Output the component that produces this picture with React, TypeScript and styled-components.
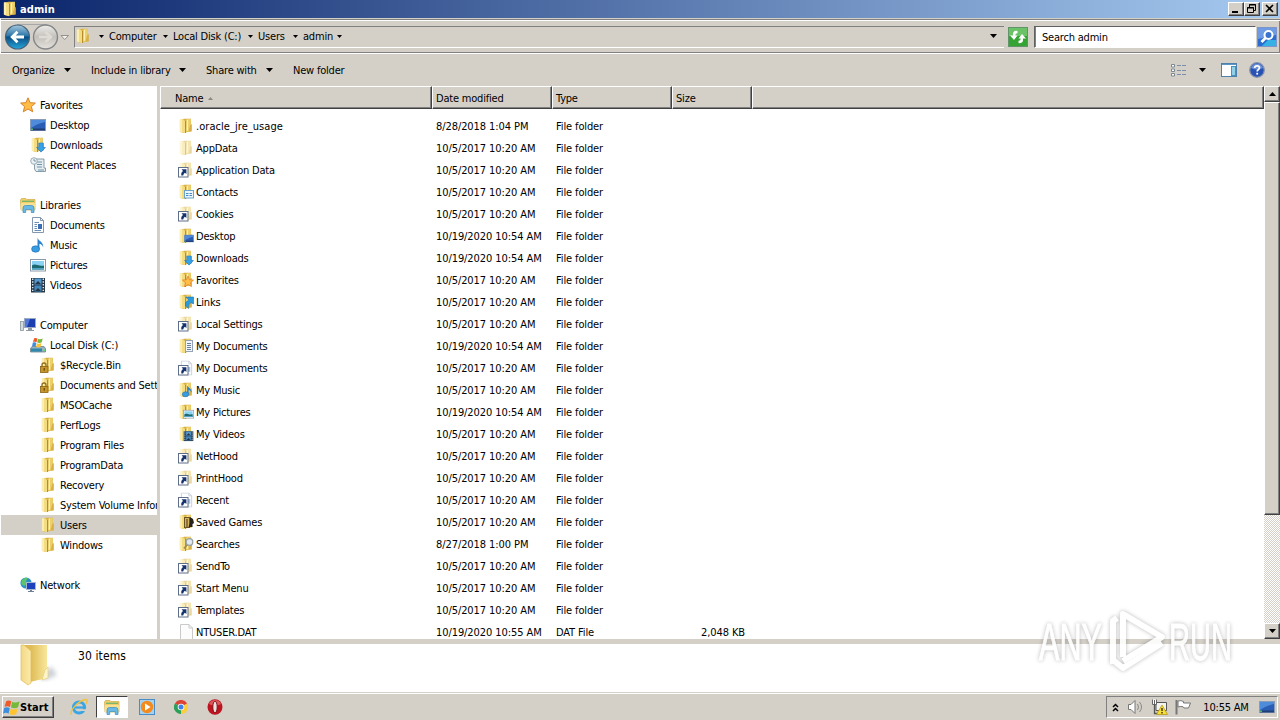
import React from "react";
import { styled, createGlobalStyle } from "styled-components";

type Kind = string;

const FolderShape = ({ faded }: { faded?: boolean }) => (
  <g opacity={faded ? 0.5 : 1}>
    <path d="M2.5 2.5 L6 0.8 H13 V13 L6 15 L2.5 14 Z" fill="#d9b145" />
    <path d="M8.6 1 H12.8 V13.6 H8 Z" fill="#ecd06d" />
    <path d="M12.3 7 L13.8 6 V13.6 H10.4 Z" fill="#d8b043" />
    <path d="M1.8 1.5 L5 1.2 L7 3 V15.3 L1.8 13.6 Z" fill="#f4dc82" />
    <path d="M2 1.5 H4 V14.3 L2 13.6 Z" fill="#fbeeb2" />
    <path d="M7.5 3 V15" stroke="#b58d2c" strokeWidth="1" />
    <path d="M9.4 2 V12.8" stroke="#fff1b3" strokeWidth="1.2" />
  </g>
);

const StarShape = () => (
  <path
    d="M8 0.8 L10.1 5.7 L15.4 6.1 L11.4 9.6 L12.7 14.8 L8 12 L3.3 14.8 L4.6 9.6 L0.6 6.1 L5.9 5.7 Z"
    fill="#ffbd45"
    stroke="#d9822b"
    strokeWidth="1"
  />
);

const ScreenShape = () => (
  <g>
    <rect x="0.5" y="2.5" width="15" height="11" fill="#2a5db4" stroke="#8a9db8" />
    <path d="M1 3 H15 V5 C10 6 5 8 1 11 Z" fill="#4e8cdb" />
    <rect x="1" y="11.5" width="14" height="2" fill="#203e76" />
    <rect x="1" y="11.5" width="2" height="1.5" fill="#55b76a" />
  </g>
);

const DownShape = () => (
  <path d="M4.5 0.5 H11.5 V8 H15 L8 15.5 L1 8 H4.5 Z" fill="#36a3e8" stroke="#2174b8" />
);

const NoteShape = () => (
  <g>
    <path d="M7.5 0.5 C8 4 13.8 4.6 13.2 10.5 C12.5 8 10.6 7 9.4 6.8 V12 H7.5 Z" fill="#2b83cf" />
    <ellipse cx="5.6" cy="12" rx="4" ry="3.2" fill="#379ce0" stroke="#1d68b0" strokeWidth="0.6" />
  </g>
);

const PageShape = () => (
  <g>
    <path d="M2.5 0.5 H10.5 L13.5 3.5 V15.5 H2.5 Z" fill="#fcfdff" stroke="#8497ae" />
    <path d="M10.5 0.5 V3.5 H13.5" fill="none" stroke="#8497ae" />
    <path d="M4.5 5.5 H9 M4.5 7.5 H7 M4.5 9.5 H7 M4.5 11.5 H7 M4.5 13.5 H11" stroke="#6d8db9" />
    <path d="M8 7 H12 V12 H8 Z" fill="#3b6fb5" />
  </g>
);

const PictureShape = () => (
  <g>
    <rect x="0.5" y="2.5" width="15" height="11.5" fill="#fff" stroke="#8999a9" />
    <rect x="2" y="4" width="12" height="8.5" fill="#8bd3f5" />
    <path d="M2 8.5 C5 6 8 9.5 14 8.5 V12.5 H2 Z" fill="#1d6a70" />
    <path d="M2 11 H14 V12.5 H2 Z" fill="#52a4c5" />
  </g>
);

const FilmShape = () => (
  <g>
    <rect x="1" y="1" width="14" height="14.5" fill="#24384a" />
    <rect x="4.5" y="1.5" width="7" height="6" fill="#5498ce" />
    <rect x="4.5" y="8.5" width="7" height="6" fill="#4388bd" />
    <path d="M5 7 L8 4 L11 7 M5 14 L8 11 L11 14" fill="#27333e" />
    <path d="M2.7 1.5 V15 M13.3 1.5 V15" stroke="#dce7ef" strokeWidth="1.4" strokeDasharray="1.4 1.4" />
  </g>
);

const WinFlag = () => (
  <g>
    <path d="M3 2 C4.6 1 6.2 1.2 7.8 2.2 L6.6 7.6 C5 6.6 3.2 6.6 1.4 7.4 Z" fill="#ef5b2a" />
    <path d="M8.6 2.6 C10.6 3.8 13 3.6 15.6 2.2 L14.2 7.8 C12 9 9.4 9 7.5 8 Z" fill="#74b93a" />
    <path d="M1.1 8.4 C3 7.4 4.8 7.6 6.4 8.6 L5.2 13.8 C3.6 12.8 1.8 12.8 0 13.8 Z" fill="#3d8ee0" />
    <path d="M7.2 9 C9.2 10.2 11.6 10 13.8 8.8 L12.5 14 C10.2 15.4 8 15.2 6 14.2 Z" fill="#fdc330" />
  </g>
);

const LibraryShape = () => (
  <g>
    <path d="M0.5 3 L1.5 1.5 H6 L7 2.5 H15 V13 H1 Z" fill="#f0cf6b" stroke="#d3a943" strokeWidth="0.7" />
    <path d="M2 4.3 H14" stroke="#79b56c" strokeWidth="1.4" />
    <path d="M1 6 H15 V13 H1 Z" fill="#f7e08f" />
    <path d="M3 15.5 V11 Q3 8.5 5.5 8.5 H11.5 Q14 8.5 14 11 V15.5 H11.3 V12.5 H5.7 V15.5 Z" fill="#69b9e6" stroke="#3b8dc4" strokeWidth="0.7" />
  </g>
);

const LinkBadge = () => (
  <g>
    <rect x="0.5" y="5.5" width="9.5" height="9.5" fill="#fff" stroke="#5f6f8a" />
    <path d="M3.6 7.2 H8.4 V12 L6.9 10.7 Q5.6 11.4 5.2 13.4 H3.4 Q2.6 10.6 5 8.9 Z" fill="#16336e" />
  </g>
);

const badge = (shape: React.ReactNode, size = 10) => (
  <svg x={16 - size} y={15.5 - size} width={size} height={size} viewBox="0 0 16 16">
    {shape}
  </svg>
);

const shapes: Record<Kind, React.ReactNode> = {
  folder: <FolderShape />,
  hidden: <FolderShape faded />,
  star: <StarShape />,
  desktop: <ScreenShape />,
  downloads: <><FolderShape />{badge(<DownShape />, 10)}</>,
  recent: (
    <g>
      <path d="M4.5 2 H14 V11 H15.5 V14.5 H6 L4.5 12 Z" fill="#e5edf1" stroke="#7d929d" strokeWidth="0.9" />
      <path d="M7 5 H12 M7 7.5 H12 M7 10 H12 M8 13 H14" stroke="#6f95ab" />
      <circle cx="4" cy="4" r="3.3" fill="#eaf2f5" stroke="#9badb6" />
      <path d="M4 2 V4 H6" fill="none" stroke="#6b818d" strokeWidth="0.8" />
    </g>
  ),
  libraries: <LibraryShape />,
  documents: <PageShape />,
  music: <NoteShape />,
  pictures: <PictureShape />,
  videos: <FilmShape />,
  computer: (
    <g>
      <rect x="0.5" y="4.5" width="3" height="9" fill="#d4dadd" stroke="#8b979d" strokeWidth="0.8" />
      <rect x="4.5" y="1.5" width="11" height="9" fill="#1c3fae" stroke="#9baac0" />
      <path d="M5 2 H10 L7 10 H5 Z" fill="#5277dc" />
      <path d="M8 11 H12 V13 H14 V14 H6 V13 H8 Z" fill="#8f9ba4" />
    </g>
  ),
  disk: (
    <g>
      <path d="M2 9.5 H14 L15.5 11.5 V15 H0.5 V11.5 Z" fill="#9ab0ba" stroke="#5d7883" strokeWidth="0.7" />
      <path d="M1 11.5 H12 V14.5 H1 Z" fill="#2d88ad" />
      <rect x="13" y="12.5" width="2" height="1.5" fill="#5fe15c" />
      <svg x="1.5" y="0" width="12" height="11" viewBox="0 0 16 16"><WinFlag /></svg>
    </g>
  ),
  locked: (
    <g>
      <FolderShape />
      <path d="M2 10 V8 Q2 6 4 6 Q6 6 6 8 V10" fill="none" stroke="#8e6d20" strokeWidth="1.3" />
      <rect x="0.5" y="9.5" width="7.5" height="6" fill="#c5942b" stroke="#8a6415" strokeWidth="0.8" />
      <rect x="3.6" y="11" width="1.3" height="2.6" fill="#6e4c0c" />
    </g>
  ),
  network: (
    <g>
      <circle cx="6" cy="6" r="5.6" fill="#2a91c8" />
      <path d="M2 3 Q5 0 8 1 L6 4 L7 7 L4 9 L1 7 Z" fill="#5cc469" />
      <rect x="6.5" y="5.5" width="9" height="7" fill="#1c43bd" stroke="#a8b7d0" />
      <path d="M10 13 H12 V14 H14 V15 H8 V14 H10 Z" fill="#6f8090" />
    </g>
  ),
  link: <g><FolderShape faded /><LinkBadge /></g>,
  linkPage: <g><g opacity="0.45">{badge(<PageShape />, 15)}</g><LinkBadge /></g>,
  contacts: (
    <g>
      <FolderShape />
      <rect x="6.5" y="6.5" width="9" height="7.5" fill="#e9f6fd" stroke="#6ba3c9" />
      <path d="M8 9.5 H10.5 M8 11.5 H10.5 M11.5 9.5 H14 M11.5 11.5 H14" stroke="#4a88bd" />
    </g>
  ),
  fDesktop: <><FolderShape />{badge(<ScreenShape />, 10)}</>,
  fStar: <><FolderShape />{badge(<StarShape />, 12)}</>,
  fLinks: (
    <g>
      <FolderShape />
      <path d="M8 3 H15.5 V10 L13 8.5 Q10 10 10.5 14.5 L7.5 12 Q6.5 8 10.5 6 Z" fill="#2a9bdd" stroke="#1d71af" strokeWidth="0.6" />
    </g>
  ),
  fDocs: (
    <g>
      <FolderShape />
      <rect x="7.5" y="2.5" width="7" height="11" fill="#f3f7fb" stroke="#93a3b3" />
      <path d="M9 5.5 H13 M9 7.5 H13 M9 9.5 H13 M9 11.5 H13" stroke="#68809c" />
    </g>
  ),
  fMusic: <><FolderShape />{badge(<NoteShape />, 13)}</>,
  fPics: <><FolderShape />{badge(<PictureShape />, 11)}</>,
  fVideos: <><FolderShape />{badge(<FilmShape />, 11)}</>,
  fGames: (
    <g>
      <FolderShape />
      <rect x="6.5" y="3.5" width="5" height="10" fill="#d5b25e" stroke="#6b5322" />
      <path d="M8 6 H10 M8 8 H10 M8 10 H10 M8 12 H10" stroke="#493714" />
      <path d="M12 3 L15 5 L16 9 L14.5 10 V13 H10.5 L12 9 Z" fill="#25221c" />
    </g>
  ),
  fSearch: (
    <g>
      <FolderShape />
      <path d="M9.5 8.5 L6 12.5" stroke="#a38a52" strokeWidth="1.8" />
      <circle cx="11.5" cy="6" r="3.3" fill="#dfe9ee" stroke="#95a0a3" strokeWidth="1.2" />
    </g>
  ),
  file: (
    <g>
      <path d="M2.5 0.5 H11 L14.5 4 V16 H2.5 Z" fill="#fcfcfc" stroke="#cacaca" />
      <path d="M11 0.5 V4 H14.5" fill="none" stroke="#cacaca" />
    </g>
  ),
};

const Icon = ({ kind, size = 16 }: { kind: Kind; size?: number }) => (
  <IconSvg width={size} height={size} viewBox="0 0 16 16">{shapes[kind]}</IconSvg>
);

const Arrow = () => (
  <IconSvg width="7" height="4" viewBox="0 0 7 4"><path d="M0 0 H7 L3.5 4 Z" fill="#000" /></IconSvg>
);

const SmallArrow = () => (
  <IconSvg width="5" height="3" viewBox="0 0 5 3"><path d="M0 0 H5 L2.5 3 Z" fill="#000" /></IconSvg>
);

const crumbs = [
  { text: "Computer", width: 64 },
  { text: "Local Disk (C:)", width: 85 },
  { text: "Users", width: 45 },
  { text: "admin", width: 44 },
];

const tree: { text?: string; icon?: Kind; level?: number; active?: boolean }[] = [
  { text: "Favorites", icon: "star", level: 0 },
  { text: "Desktop", icon: "desktop", level: 1 },
  { text: "Downloads", icon: "downloads", level: 1 },
  { text: "Recent Places", icon: "recent", level: 1 },
  {},
  { text: "Libraries", icon: "libraries", level: 0 },
  { text: "Documents", icon: "documents", level: 1 },
  { text: "Music", icon: "music", level: 1 },
  { text: "Pictures", icon: "pictures", level: 1 },
  { text: "Videos", icon: "videos", level: 1 },
  {},
  { text: "Computer", icon: "computer", level: 0 },
  { text: "Local Disk (C:)", icon: "disk", level: 1 },
  { text: "$Recycle.Bin", icon: "locked", level: 2 },
  { text: "Documents and Settings", icon: "locked", level: 2 },
  { text: "MSOCache", icon: "folder", level: 2 },
  { text: "PerfLogs", icon: "folder", level: 2 },
  { text: "Program Files", icon: "folder", level: 2 },
  { text: "ProgramData", icon: "folder", level: 2 },
  { text: "Recovery", icon: "folder", level: 2 },
  { text: "System Volume Information", icon: "folder", level: 2 },
  { text: "Users", icon: "folder", level: 2, active: true },
  { text: "Windows", icon: "folder", level: 2 },
  {},
  { text: "Network", icon: "network", level: 0 },
];

const OLD = "10/5/2017 10:20 AM";
const NEW = "10/19/2020 10:54 AM";

const files: [string, Kind, string, string?, string?][] = [
  [".oracle_jre_usage", "folder", "8/28/2018 1:04 PM"],
  ["AppData", "hidden", OLD],
  ["Application Data", "link", OLD],
  ["Contacts", "contacts", OLD],
  ["Cookies", "link", OLD],
  ["Desktop", "fDesktop", NEW],
  ["Downloads", "downloads", NEW],
  ["Favorites", "fStar", OLD],
  ["Links", "fLinks", OLD],
  ["Local Settings", "link", OLD],
  ["My Documents", "fDocs", NEW],
  ["My Documents", "linkPage", OLD],
  ["My Music", "fMusic", OLD],
  ["My Pictures", "fPics", NEW],
  ["My Videos", "fVideos", OLD],
  ["NetHood", "link", OLD],
  ["PrintHood", "link", OLD],
  ["Recent", "linkPage", OLD],
  ["Saved Games", "fGames", OLD],
  ["Searches", "fSearch", "8/27/2018 1:00 PM"],
  ["SendTo", "link", OLD],
  ["Start Menu", "link", OLD],
  ["Templates", "link", OLD],
  ["NTUSER.DAT", "file", "10/19/2020 10:55 AM", "DAT File", "2,048 KB"],
];

const App = () => {
  return (
    <Screen>
      <GlobalStyle />
      <TitleBar>
        <Icon kind="folder" />
        <Title>admin</Title>
        <WinButton>
          <svg width="12" height="10"><path d="M3 8 H9" stroke="#000" strokeWidth="2" /></svg>
        </WinButton>
        <WinButton>
          <svg width="12" height="10">
            <path d="M4.5 3 V0.5 H10.5 V6.5 H8 M4 1 H11" fill="none" stroke="#000" />
            <path d="M2.5 3.5 H8.5 V8.5 H2.5 Z M2 4 H9" fill="none" stroke="#000" />
          </svg>
        </WinButton>
        <WinButton $gap>
          <svg width="12" height="10"><path d="M3 1 L10 8 M10 1 L3 8" stroke="#000" strokeWidth="1.6" /></svg>
        </WinButton>
      </TitleBar>

      <AddressRow>
        <NavButtons>
          <svg width="72" height="28" viewBox="0 0 72 28">
            <defs>
              <linearGradient id="back" x1="0" y1="0" x2="0" y2="1">
                <stop offset="0" stopColor="#a7c8dc" />
                <stop offset="0.45" stopColor="#2b77a9" />
                <stop offset="0.5" stopColor="#0b4d82" />
                <stop offset="1" stopColor="#24a7dc" />
              </linearGradient>
              <linearGradient id="fwd" x1="0" y1="0" x2="0" y2="1">
                <stop offset="0" stopColor="#eeedea" />
                <stop offset="0.5" stopColor="#c3c0bb" />
                <stop offset="1" stopColor="#e6e3dd" />
              </linearGradient>
            </defs>
            <path d="M16 1.5 H46" stroke="#a5a7a8" />
            <circle cx="16.5" cy="14" r="12" fill="url(#back)" stroke="#47637c" strokeWidth="1.2" />
            <path d="M23 14 H12 M16.5 8.8 L11.2 14 L16.5 19.2" fill="none" stroke="#fff" strokeWidth="2.8" />
            <circle cx="44.5" cy="14" r="12" fill="url(#fwd)" stroke="#85878a" strokeWidth="1.4" />
            <path d="M38 14 H49 M44.5 9 L50 14 L44.5 19" fill="none" stroke="#dedbd5" strokeWidth="2.6" />
            <path d="M60 12.5 H67.5 L63.7 16.5 Z" fill="#f2f0ec" stroke="#8b8882" strokeWidth="0.9" />
          </svg>
        </NavButtons>
        <AddressBox>
          <Icon kind="folder" />
          <CrumbArrow><SmallArrow /></CrumbArrow>
          {crumbs.map((c) => (
            <Crumb key={c.text} $width={c.width}>
              <span>{c.text}</span>
              <SmallArrow />
            </Crumb>
          ))}
          <DropArrow><Arrow /></DropArrow>
        </AddressBox>
        <Refresh>
          <svg width="20" height="20" viewBox="0 0 20 20">
            <rect x="0.5" y="0.5" width="19" height="19" fill="#35a434" stroke="#62946a" />
            <rect x="1" y="1" width="18" height="8" fill="#6cc266" />
            <path d="M9.5 4 Q4.5 3 5 8.5 H2 L6 13 L9.5 8.5 H7.3 Q7.3 6 9.5 6.2 Z" fill="#fff" />
            <path d="M10.5 16 Q15.5 17 15 11.5 H18 L14 7 L10.5 11.5 H12.7 Q12.7 14 10.5 13.8 Z" fill="#fff" />
          </svg>
        </Refresh>
        <SearchBox>Search admin</SearchBox>
        <svg width="20" height="20" viewBox="0 0 20 20">
          <rect x="0.5" y="0.5" width="19" height="19" fill="#2b6cd0" stroke="#7e96c7" />
          <path d="M1 1 H19 V8 L1 12 Z" fill="#6f9be4" />
          <path d="M11 13 H19 V19 H5 Z" fill="#36b1e6" />
          <circle cx="11.5" cy="8" r="4" fill="#3a72d0" stroke="#fff" strokeWidth="2" />
          <path d="M8.5 11 L4.5 15" stroke="#fff" strokeWidth="2.6" />
        </svg>
      </AddressRow>

      <Toolbar>
        <Tool $width={79}><span>Organize</span><Arrow /></Tool>
        <Tool $width={115}><span>Include in library</span><Arrow /></Tool>
        <Tool $width={87}><span>Share with</span><Arrow /></Tool>
        <Tool $width={60}><span>New folder</span></Tool>
        <ToolIcons>
          <svg width="16" height="14" viewBox="0 0 16 14">
            <path d="M0.5 1.5 H3.5 V4 H0.5 Z M0.5 6 H3.5 V8.5 H0.5 Z M0.5 10.5 H3.5 V13 H0.5 Z" fill="#fff" stroke="#7b8793" />
            <path d="M6 2.5 H15.5 M6 7.5 H15.5 M6 11.5 H15.5" stroke="#7b8eac" strokeDasharray="4 1" />
          </svg>
          <ViewArrow><Arrow /></ViewArrow>
          <svg width="16" height="14" viewBox="0 0 16 14">
            <rect x="0.5" y="0.5" width="15" height="13" fill="#fff" stroke="#4d80ac" />
            <path d="M1 1.5 H15" stroke="#5c96c4" />
            <rect x="10.5" y="3.5" width="4" height="9" fill="#8fd0ea" stroke="#4891b7" />
          </svg>
          <svg width="16" height="16" viewBox="0 0 16 16">
            <circle cx="8" cy="8" r="7.3" fill="#2752b3" stroke="#8793ae" strokeWidth="1.3" />
            <path d="M2 6 Q4 1.8 8 1.8 Q12 1.8 14 6 Q8 9 2 6 Z" fill="#6d8fd8" />
            <path d="M5.6 6 Q5.8 3.8 8 3.8 Q10.4 3.8 10.4 5.8 Q10.4 7 9.2 7.7 Q8.2 8.3 8.2 9.6" fill="none" stroke="#fff" strokeWidth="1.7" />
            <rect x="7.3" y="10.8" width="1.8" height="1.8" fill="#fff" />
          </svg>
        </ToolIcons>
      </Toolbar>

      <Main>
        <Sidebar>
          {tree.map((item, i) => (
            <TreeRow key={i} $level={item.level || 0} $active={item.active}>
              {item.icon && <Icon kind={item.icon} />}
              <span>{item.text}</span>
            </TreeRow>
          ))}
        </Sidebar>
        <FilePane>
          <HeaderRow>
            <HeadCell $width={272} $pad={15}>
              Name
              <svg width="5" height="3"><path d="M0 3 L2.5 0 L5 3 Z" fill="#8c8883" /></svg>
            </HeadCell>
            <HeadCell $width={120}>Date modified</HeadCell>
            <HeadCell $width={120}>Type</HeadCell>
            <HeadCell $width={80}>Size</HeadCell>
            <HeadCell $width={512} />
          </HeaderRow>
          <FileList>
            {files.map(([name, icon, date, type, size], i) => (
              <FileRow key={i}>
                <Icon kind={icon} />
                <NameCell $wide={name.startsWith(".")}>{name}</NameCell>
                <DateCell>{date}</DateCell>
                <TypeCell>{type || "File folder"}</TypeCell>
                <SizeCell>{size}</SizeCell>
              </FileRow>
            ))}
          </FileList>
        </FilePane>
        <Scrollbar>
          <ScrollButton><svg width="7" height="4"><path d="M0 4 L3.5 0 L7 4 Z" /></svg></ScrollButton>
          <Thumb />
          <Track />
          <ScrollButton><Arrow /></ScrollButton>
        </Scrollbar>
      </Main>

      <Details>
        <svg width="40" height="44" viewBox="0 0 40 44">
          <defs>
            <linearGradient id="flap" x1="0" y1="0" x2="1" y2="0">
              <stop offset="0" stopColor="#f3d987" />
              <stop offset="1" stopColor="#fbeaaa" />
            </linearGradient>
            <linearGradient id="inside" x1="0" y1="0" x2="1" y2="0">
              <stop offset="0.3" stopColor="#dfbc57" />
              <stop offset="1" stopColor="#f8e79c" />
            </linearGradient>
            <filter id="soft"><feGaussianBlur stdDeviation="2" /></filter>
          </defs>
          <path d="M20 36 L31 22 L37 31 L26 36 Z" fill="#a9b4bd" opacity="0.6" filter="url(#soft)" />
          <path d="M4 1 H27 V34 L10 38 Z" fill="url(#inside)" />
          <path d="M25 26 L28 23 V34 L22 36 Z" fill="#fff5c8" stroke="#e5c86c" strokeWidth="0.6" />
          <path d="M1 1 L4 1 L11 7 V39 L8 41 L1 36 Z" fill="url(#flap)" stroke="#e0bc5b" strokeWidth="0.7" />
        </svg>
        <ItemCount>30 items</ItemCount>
      </Details>

      <Taskbar>
        <StartButton>
          <svg width="17" height="17" viewBox="0 0 16 16"><WinFlag /></svg>
          <span>Start</span>
        </StartButton>
        <TaskButton>
          <svg width="18" height="18" viewBox="0 0 18 18">
            <circle cx="9" cy="9.5" r="5.6" fill="none" stroke="#3aa5e4" strokeWidth="3" />
            <path d="M5 9.5 H14" stroke="#3aa5e4" strokeWidth="2.2" />
            <path d="M10 11.2 H17 V13 H10 Z" fill="#d4d0c8" />
            <path d="M1.5 16.5 C-1 13 9 2 16 1.5 C18 1.7 17 4 16 6" fill="none" stroke="#efc13c" strokeWidth="1.4" />
          </svg>
        </TaskButton>
        <TaskButton $active><Icon kind="libraries" /></TaskButton>
        <TaskButton>
          <svg width="16" height="16" viewBox="0 0 16 16">
            <rect x="0.5" y="0.5" width="15" height="15" fill="#a6d2ef" stroke="#4a8cc5" />
            <circle cx="8" cy="8" r="6.2" fill="#f28a1d" />
            <path d="M6 4.4 L11.6 8 L6 11.6 Z" fill="#fff" />
          </svg>
        </TaskButton>
        <TaskButton>
          <svg width="14" height="14" viewBox="0 0 14 14">
            <path d="M7 7 L0.9 3.5 A7 7 0 0 1 13.1 3.5 Z" fill="#dc4437" />
            <path d="M7 7 L0.9 3.5 A7 7 0 0 0 7 14 Z" fill="#2c9f58" />
            <path d="M7 7 L13.1 3.5 A7 7 0 0 1 7 14 Z" fill="#fbcc3c" />
            <circle cx="7" cy="7" r="3.3" fill="#fff" />
            <circle cx="7" cy="7" r="2.5" fill="#3f80ed" />
          </svg>
        </TaskButton>
        <TaskButton>
          <svg width="16" height="16" viewBox="0 0 16 16">
            <ellipse cx="8" cy="8" rx="7.5" ry="7.8" fill="#bd1420" />
            <path d="M2 5 Q4 1 8 1 Q12 1 14 5 Q8 8 2 5 Z" fill="#dd5a5c" />
            <ellipse cx="8" cy="8" rx="2.2" ry="5.8" fill="#e9e3df" stroke="#84101a" strokeWidth="1" />
          </svg>
        </TaskButton>
        <Tray>
          <svg width="7" height="9" viewBox="0 0 7 9"><path d="M1 4 L3.5 1.5 L6 4 M1 8 L3.5 5.5 L6 8" fill="none" stroke="#000" strokeWidth="1.5" /></svg>
          <TrayIcons>
            <svg width="17" height="16" viewBox="0 0 17 16">
              <path d="M1.5 5.5 H4 L8 1.5 V14.5 L4 10.5 H1.5 Z" fill="#fff" stroke="#777" />
              <path d="M10.5 5 Q12.5 8 10.5 11 M12.5 3 Q16.5 8 12.5 13" fill="none" stroke="#888" />
            </svg>
            <svg width="17" height="16" viewBox="0 0 17 16">
              <path d="M5 3.5 H15.5 V11.5 H5 Z" fill="#f2f2ef" stroke="#555" />
              <path d="M1.5 0.5 V5.5 H5.5 V0.5 M3.5 1 V5" fill="#fff" stroke="#666" />
              <path d="M3.5 5.5 V14.5 H8" fill="none" stroke="#555" strokeWidth="1.3" />
              <path d="M11 6 L16.5 15.5 H5.5 Z" fill="#f9df35" stroke="#b79818" strokeWidth="0.8" />
              <path d="M11 9 V12 M11 13 V14.4" stroke="#222" strokeWidth="1.3" />
            </svg>
            <svg width="17" height="16" viewBox="0 0 17 16">
              <path d="M1.5 1 V15.5" stroke="#777" strokeWidth="2" />
              <path d="M3 2 Q6 1 8.5 2.5 V4 H15.5 L13.5 9 H9 L8 7.7 Q5 7 3 8 Z" fill="#fff" stroke="#777" />
            </svg>
          </TrayIcons>
          <Clock>10:55 AM</Clock>
          <Icon kind="desktop" />
        </Tray>
      </Taskbar>

      <Watermark>
        <svg width="204" height="72" viewBox="0 0 204 72">
          <text x="4" y="54" textLength="63" lengthAdjust="spacingAndGlyphs">ANY</text>
          <text x="134" y="54" textLength="63" lengthAdjust="spacingAndGlyphs">RUN</text>
          <path d="M78 58 V15 L82 12" />
          <path d="M88 51 V8 L127 31 L88 55" />
          <path d="M78 54 L88 62 L127 37" />
        </svg>
      </Watermark>
    </Screen>
  );
};

export default App;

const GlobalStyle = createGlobalStyle`
  * { box-sizing: border-box; }
  body {
    margin: 0;
    overflow: hidden;
    font-family: "DejaVu Sans Condensed", "DejaVu Sans", sans-serif;
    font-stretch: condensed;
    font-size: 11px;
    letter-spacing: -0.2px;
    color: #000;
  }
`;

const Screen = styled.div`
  width: 1280px;
  height: 720px;
  display: flex;
  flex-direction: column;
  background: #d4d0c8;
  white-space: nowrap;
`;

const IconSvg = styled.svg`
  flex: none;
  display: block;
`;

const TitleBar = styled.div`
  height: 18px;
  display: flex;
  align-items: center;
  padding: 0 2px;
  background: linear-gradient(to right, #0a246a, #a6caf0);
`;

const Title = styled.div`
  flex: 1;
  padding-left: 2px;
  color: #fff;
  font-weight: bold;
  letter-spacing: 0.1px;
`;

const raised = `
  background: #d4d0c8;
  border: 1px solid;
  border-color: #fff #404040 #404040 #fff;
  box-shadow: inset -1px -1px 0 #808080;
`;

const WinButton = styled.div<{ $gap?: boolean }>`
  ${raised}
  width: 16px;
  height: 14px;
  display: flex;
  align-items: center;
  margin-left: ${(p) => (p.$gap ? 2 : 0)}px;
`;

const AddressRow = styled.div`
  height: 36px;
  display: flex;
  align-items: center;
  border-top: 1px solid #d4d0c8;
  border-left: 1px solid #fff;
  border-bottom: 1px solid #fff;
  box-shadow: inset 0 1px 0 #808080, inset 0 2px 0 #fff, inset 0 -1px 0 #808080, inset -1px 0 0 #808080;
  padding: 2px 2px 0 0;
`;

const NavButtons = styled.div`
  width: 73px;
  height: 28px;
`;

const AddressBox = styled.div`
  width: 930px;
  height: 22px;
  display: flex;
  align-items: center;
  padding-bottom: 2px;
  border-top: 1px solid #808080;
  border-left: 1px solid #808080;
  border-bottom: 1px solid #fff;
`;

const CrumbArrow = styled.div`
  width: 18px;
  padding-left: 8px;
`;

const Crumb = styled.div<{ $width: number }>`
  width: ${(p) => p.$width}px;
  flex: none;
  display: flex;
  align-items: center;
  justify-content: space-between;
  padding-right: 5px;
`;

const DropArrow = styled.div`
  margin-left: auto;
  padding-right: 7px;
`;

const Refresh = styled.div`
  width: 30px;
  height: 20px;
  padding-left: 4px;
`;

const SearchBox = styled.div`
  width: 222px;
  height: 22px;
  margin-right: 1px;
  padding-left: 7px;
  line-height: 22px;
  background: #fff;
  border: 1px solid;
  border-color: #606060 #fff #fff #606060;
  box-shadow: inset 1px 0 0 #808080;
`;

const Toolbar = styled.div`
  height: 32px;
  display: flex;
  align-items: center;
  padding: 0 15px 0 12px;
`;

const Tool = styled.div<{ $width: number }>`
  width: ${(p) => p.$width}px;
  display: flex;
  align-items: center;
  justify-content: space-between;
  padding-right: ${(p) => (p.$width > 60 ? 20 : 0)}px;
`;

const ToolIcons = styled.div`
  margin-left: auto;
  display: flex;
  align-items: center;
  gap: 12px;
`;

const ViewArrow = styled.div`
  margin-right: 3px;
`;

const Main = styled.div`
  height: 553px;
  display: flex;
`;

const Sidebar = styled.div`
  width: 160px;
  overflow: hidden;
  background: #fff;
  border-right: 3px solid #d4d0c8;
  padding-top: 9px;
`;

const TreeRow = styled.div<{ $level: number; $active?: boolean }>`
  height: 20px;
  display: flex;
  align-items: center;
  gap: 4px;
  margin-left: 1px;
  padding-left: ${(p) => 19 + p.$level * 10}px;
  background: ${(p) => (p.$active ? "#d4d0c8" : "transparent")};
`;

const FilePane = styled.div`
  width: 1104px;
  background: #fff;
  overflow: hidden;
`;

const HeaderRow = styled.div`
  height: 23px;
  display: flex;
`;

const HeadCell = styled.div<{ $width: number; $pad?: number }>`
  ${raised}
  width: ${(p) => p.$width}px;
  display: flex;
  align-items: center;
  gap: 5px;
  padding: 2px 0 0 ${(p) => (p.$pad || 4) - 1}px;
`;

const FileList = styled.div`
  padding: 6px 0 0 18px;
`;

const FileRow = styled.div`
  height: 22px;
  display: flex;
  align-items: center;
`;

const NameCell = styled.div<{ $wide?: boolean }>`
  width: 242px;
  padding-left: 2px;
  letter-spacing: ${(p) => (p.$wide ? 0.05 : -0.2)}px;
`;

const DateCell = styled.div`
  width: 120px;
  letter-spacing: -0.08px;
`;

const TypeCell = styled.div`
  width: 120px;
  letter-spacing: -0.12px;
`;

const SizeCell = styled.div`
  width: 69px;
  text-align: right;
  letter-spacing: -0.1px;
`;

const Scrollbar = styled.div`
  width: 16px;
  display: flex;
  flex-direction: column;
`;

const ScrollButton = styled.div`
  ${raised}
  height: 16px;
  display: flex;
  align-items: center;
  justify-content: center;
`;

const Thumb = styled.div`
  ${raised}
  height: 413px;
`;

const Track = styled.div`
  flex: 1;
  background: repeating-conic-gradient(#fff 0 25%, #d4d0c8 0 50%) 0 0 / 2px 2px;
`;

const Details = styled.div`
  height: 53px;
  display: flex;
  padding-left: 20px;
  background: #fff;
  border-top: 5px solid #d4d0c8;
`;

const ItemCount = styled.div`
  padding: 5px 0 0 18px;
  font-size: 12px;
  letter-spacing: 0.1px;
`;

const Taskbar = styled.div`
  height: 28px;
  display: flex;
  align-items: center;
  padding: 1px 2px 0;
  border-top: 1px solid #d4d0c8;
  box-shadow: inset 0 1px 0 #fff;
`;

const StartButton = styled.div`
  ${raised}
  width: 52px;
  height: 22px;
  margin-right: 8px;
  display: flex;
  align-items: center;
  font-weight: bold;
  letter-spacing: 0.1px;
`;

const TaskButton = styled.div<{ $active?: boolean }>`
  width: ${(p) => (p.$active ? 32 : 34)}px;
  margin-right: ${(p) => (p.$active ? 2 : 0)}px;
  height: 22px;
  display: flex;
  align-items: center;
  justify-content: center;
  background: ${(p) => (p.$active ? "#fff" : "transparent")};
  border: 1px solid transparent;
  border-color: ${(p) => (p.$active ? "#404040 #fff #fff #404040" : "transparent")};
`;

const Tray = styled.div`
  width: 172px;
  height: 22px;
  margin-left: auto;
  display: flex;
  align-items: center;
  justify-content: space-between;
  padding: 0 2px 0 5px;
  border: 1px solid;
  border-color: #808080 #fff #fff #808080;
`;

const TrayIcons = styled.div`
  display: flex;
  gap: 7px;
`;

const Clock = styled.div`
  width: 48px;
  margin-left: 4px;
`;

const Watermark = styled.div`
  position: absolute;
  left: 1035px;
  top: 606px;
  opacity: 0.9;
  filter: drop-shadow(0 0 2px rgba(0, 0, 0, 0.3));
  text {
    font-family: "Liberation Sans Narrow", "Liberation Sans", sans-serif;
    font-size: 52px;
    letter-spacing: 0;
    fill: #fff;
    stroke: #fff;
    stroke-width: 1;
  }
  path {
    fill: none;
    stroke: #fff;
    stroke-width: 6;
    stroke-linejoin: round;
  }
`;
